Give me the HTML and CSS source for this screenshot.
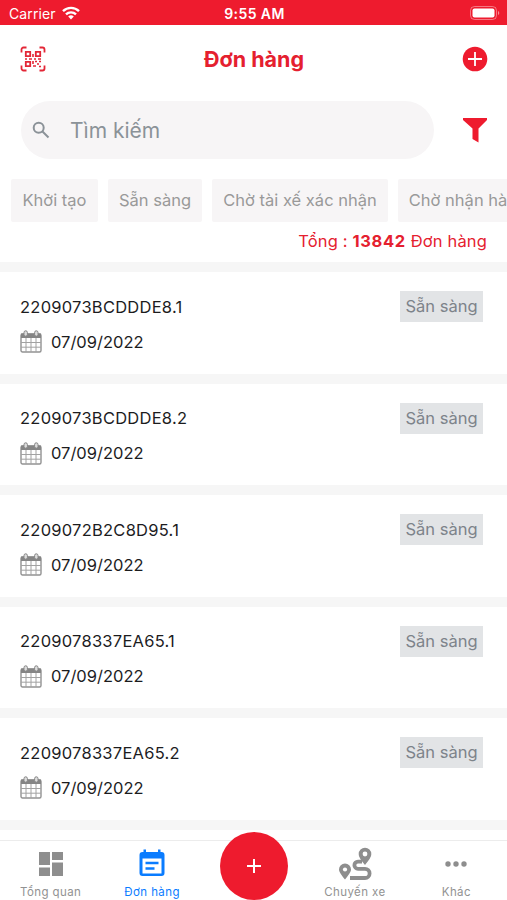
FILE: index.html
```html
<!DOCTYPE html>
<html lang="vi">
<head>
    <meta charset="utf-8">
    <title>Đơn hàng</title>
    <link rel="stylesheet" href="styles.css">
</head>
<body>
    <div class="status-bar">
        <div class="carrier">
            <span>Carrier</span>
            <svg width="18" height="14" viewBox="0 0 18 14" fill="none" stroke="#fff" stroke-width="2.4">
                <path d="M1 5.2a11.4 11.4 0 0 1 16 0"/>
                <path d="M4 8.4a7.2 7.2 0 0 1 10 0"/>
                <path d="M9 13.6L6.2 10.6a4 4 0 0 1 5.6 0z" fill="#fff" stroke="none"/>
            </svg>
        </div>
        <div class="clock">9:55 AM</div>
        <div class="battery">
            <svg width="30" height="14" viewBox="0 0 30 14">
                <rect x=".5" y=".5" width="26" height="13" rx="4" fill="none" stroke="#fff" stroke-opacity=".4"/>
                <rect x="2.500" y="2.500" width="22" height="9" rx="2" fill="#fff"/>
                <path d="M28 5a2.200 2.200 0 0 1 0 4z" fill="#fff" fill-opacity=".5"/>
            </svg>
        </div>
    </div>

    <div class="header">
        <svg width="26" height="26" viewBox="0 0 26 26" fill="none" stroke="#e32636" stroke-width="1.8">
            <path d="M1.5 6.5V3.5a2 2 0 0 1 2-2h3M19.5 1.5h3a2 2 0 0 1 2 2v3M24.5 19.5v3a2 2 0 0 1-2 2h-3M6.500 24.500h-3a2 2 0 0 1-2-2v-3"/>
            <path d="M5.800 5.800h4.400v4.400H5.800zM15.800 5.800h4.400v4.400h-4.400zM5.800 15.800h4.400v4.400H5.800z"/>
            <path d="M13 8v3M5 13h2M9 13h3M14 13h2M18 13h3M13 15v3M15 15.500h2M19 15.500h2M17 18h2M13 20h3M19 20.500h2" stroke-width="1.600"/>
        </svg>
        <h1>Đơn hàng</h1>
        <svg width="26" height="26" viewBox="0 0 26 26">
            <circle cx="13" cy="13" r="12.3" fill="#ee1b2e"/>
            <path d="M13 6v14M6 13h14" stroke="#fff" stroke-width="1.8"/>
        </svg>
    </div>

    <div class="search-row">
        <div class="search">
            <svg width="18" height="18" viewBox="0 0 18 18" fill="none" stroke="#8b9298" stroke-width="2">
                <circle cx="6.700" cy="6.700" r="5"/>
                <path d="M10.500 10.500l6 6"/>
            </svg>
            <span>Tìm kiếm</span>
        </div>
        <svg width="26" height="26" viewBox="0 0 26 26">
            <path d="M1 1h24v2l-8.500 8.500V25.500l-6-3.500V11.500L1 3z" fill="#ee1b2e"/>
        </svg>
    </div>

    <div class="chips">
        <div class="chip chip-1">Khởi tạo</div>
        <div class="chip chip-2">Sẵn sàng</div>
        <div class="chip chip-3">Chờ tài xế xác nhận</div>
        <div class="chip chip-4">Chờ nhận hàng</div>
    </div>
    <div class="total">Tổng : <b>13842</b> Đơn hàng</div>

    <svg class="defs">
        <symbol id="calendar" viewBox="0 0 22 23">
            <rect x="1" y="4" width="20" height="18" rx="1.5" fill="#fff" stroke="#929292" stroke-width="1.4"/>
            <path d="M1 3.500h20V8H1z" fill="#858585"/>
            <path d="M1 12.500h20M1 17.200h20M6 8v14M11 8v14M16 8v14" stroke="#a2a2a2"/>
            <rect x="4" y=".8" width="3.400" height="5.400" rx="1.700" fill="#ddd" stroke="#858585"/>
            <rect x="14.600" y=".8" width="3.400" height="5.400" rx="1.700" fill="#ddd" stroke="#858585"/>
        </symbol>
    </svg>
    <div class="orders">
        <div class="order">
            <div class="order-top"><span class="code">2209073BCDDDE8.1</span><span class="badge">Sẵn sàng</span></div>
            <div class="date"><svg width="22" height="23"><use href="#calendar"/></svg>07/09/2022</div>
        </div>
        <div class="order">
            <div class="order-top"><span class="code">2209073BCDDDE8.2</span><span class="badge">Sẵn sàng</span></div>
            <div class="date"><svg width="22" height="23"><use href="#calendar"/></svg>07/09/2022</div>
        </div>
        <div class="order">
            <div class="order-top"><span class="code">2209072B2C8D95.1</span><span class="badge">Sẵn sàng</span></div>
            <div class="date"><svg width="22" height="23"><use href="#calendar"/></svg>07/09/2022</div>
        </div>
        <div class="order">
            <div class="order-top"><span class="code">2209078337EA65.1</span><span class="badge">Sẵn sàng</span></div>
            <div class="date"><svg width="22" height="23"><use href="#calendar"/></svg>07/09/2022</div>
        </div>
        <div class="order">
            <div class="order-top"><span class="code">2209078337EA65.2</span><span class="badge">Sẵn sàng</span></div>
            <div class="date"><svg width="22" height="23"><use href="#calendar"/></svg>07/09/2022</div>
        </div>
        <div class="order"></div>
    </div>

    <div class="tabs">
        <div class="tab">
            <svg width="34" height="34" viewBox="0 0 34 34" fill="#8e8e8e">
                <path d="M5 5h11v13H5zM18 5h11v8H18zM5 20.500h11V29H5zM18 15.500h11V29H18z"/>
            </svg>
            <span>Tổng quan</span>
        </div>
        <div class="tab tab-active">
            <svg width="34" height="34" viewBox="0 0 34 34">
                <path d="M8.500 2.500H11V5h12V2.500h2.500V5h1a3 3 0 0 1 3 3v18a3 3 0 0 1-3 3h-19a3 3 0 0 1-3-3V8a3 3 0 0 1 3-3h1z" fill="#0a7cff"/>
                <path d="M7.500 11.500h19v15h-19z" fill="#fff"/>
                <path d="M10.500 16h13M10.500 21.500h9" stroke="#0a7cff" stroke-width="2.400"/>
            </svg>
            <span>Đơn hàng</span>
        </div>
        <div class="tab tab-add">
            <div class="add">
                <svg width="16" height="16" viewBox="0 0 16 16" stroke="#fff" stroke-width="2"><path d="M8 1v14M1 8h14"/></svg>
            </div>
        </div>
        <div class="tab">
            <svg width="34" height="34" viewBox="0 0 34 34" fill="none" stroke="#8e8e8e">
                <path d="M12 31h15a4.600 4.600 0 0 0 0-9.200h-7a3.600 3.600 0 0 1 0-7.200h4" stroke-width="3.800"/>
                <path d="M7 32.500C3.500 28 1 25 1 22.500a6 6 0 0 1 12 0C13 25 10.500 28 7 32.500z" fill="#8e8e8e" stroke="none"/>
                <path d="M27 18c-3.800-4.800-6.300-7.800-6.300-11a6.300 6.300 0 0 1 12.600 0c0 3.200-2.500 6.200-6.300 11z" fill="#8e8e8e" stroke="none"/>
                <circle cx="7" cy="22.500" r="2.100" fill="#fff" stroke="none"/>
                <circle cx="27" cy="7" r="2.400" fill="#fff" stroke="none"/>
            </svg>
            <span>Chuyến xe</span>
        </div>
        <div class="tab">
            <svg width="34" height="34" viewBox="0 0 34 34" fill="#8e8e8e">
                <circle cx="9" cy="17" r="2.700"/><circle cx="17" cy="17" r="2.700"/><circle cx="25" cy="17" r="2.700"/>
            </svg>
            <span>Khác</span>
        </div>
    </div>
</body>
</html>
```
FILE: styles.css
```css
* { margin: 0; padding: 0; box-sizing: border-box; }
body { width: 507px; height: 900px; overflow: hidden; display: flex; flex-direction: column; background: #fff; color: #1c1c1e; font-family: Inter, "Liberation Sans", sans-serif; }
svg { display: block; flex-shrink: 0; }
.defs { width: 0; height: 0; position: absolute; }

.status-bar { height: 25px; flex-shrink: 0; padding: 1px 7px 0 9px; display: grid; grid-template-columns: 1fr auto 1fr; align-items: center; background: #ee1b2e; color: #fff; font-size: 14px; }
.carrier { display: flex; align-items: center; gap: 6px; letter-spacing: .1px; }
.clock { font-weight: 600; letter-spacing: .4px; }
.battery { justify-self: end; }

.header { height: 67px; flex-shrink: 0; padding: 0 19px 0 20px; display: flex; align-items: center; justify-content: space-between; }
h1 { font-size: 21.5px; font-weight: 700; color: #e5202f; }

.search-row { height: 76px; flex-shrink: 0; padding: 0 19px 0 21px; display: flex; align-items: center; justify-content: space-between; }
.search { width: 413px; height: 58px; padding-left: 11px; display: flex; align-items: center; gap: 20px; border-radius: 29px; background: #f7f5f6; color: #8b9298; font-size: 21px; }

.chips { height: 63px; flex-shrink: 0; padding: 11px 0 0 11px; display: flex; gap: 10px; overflow: hidden; }
.chip { height: 43px; flex-shrink: 0; border-radius: 2px; background: #f7f5f6; color: #999; font-size: 16.5px; line-height: 43px; text-align: center; white-space: nowrap; }
.chip-1 { width: 87px; }
.chip-2 { width: 94px; }
.chip-3 { width: 176px; }
.chip-4 { width: 140px; }
.total { height: 31px; flex-shrink: 0; padding-right: 20px; text-align: right; font-size: 16.5px; line-height: 21px; letter-spacing: .15px; color: #e5202f; }
.total b { letter-spacing: .7px; }

.orders { flex: 1; overflow: hidden; }
.order { height: 111.6px; padding: 19px 24px 0 20px; border-top: 10px solid #f6f6f6; font-size: 16.5px; }
.order-top { display: flex; align-items: center; justify-content: space-between; }
.code { letter-spacing: .25px; }
.badge { width: 83px; height: 31px; line-height: 31px; text-align: center; background: #e2e4e6; color: #7d838a; }
.date { margin-top: 8px; display: flex; align-items: center; gap: 9px; }

.tabs { height: 60px; flex-shrink: 0; display: flex; border-top: 1px solid #ececec; background: #fff; color: #929292; font-size: 11.5px; letter-spacing: .4px; }
.tab { flex: 1; padding-top: 6px; display: flex; flex-direction: column; align-items: center; gap: 4px; }
.tab-active { color: #0a7cff; }
.tab-add { padding-top: 0; }
.add { width: 68px; height: 68px; margin-top: -9px; display: flex; align-items: center; justify-content: center; flex-shrink: 0; border-radius: 50%; background: #ee1b2e; position: relative; }
```
